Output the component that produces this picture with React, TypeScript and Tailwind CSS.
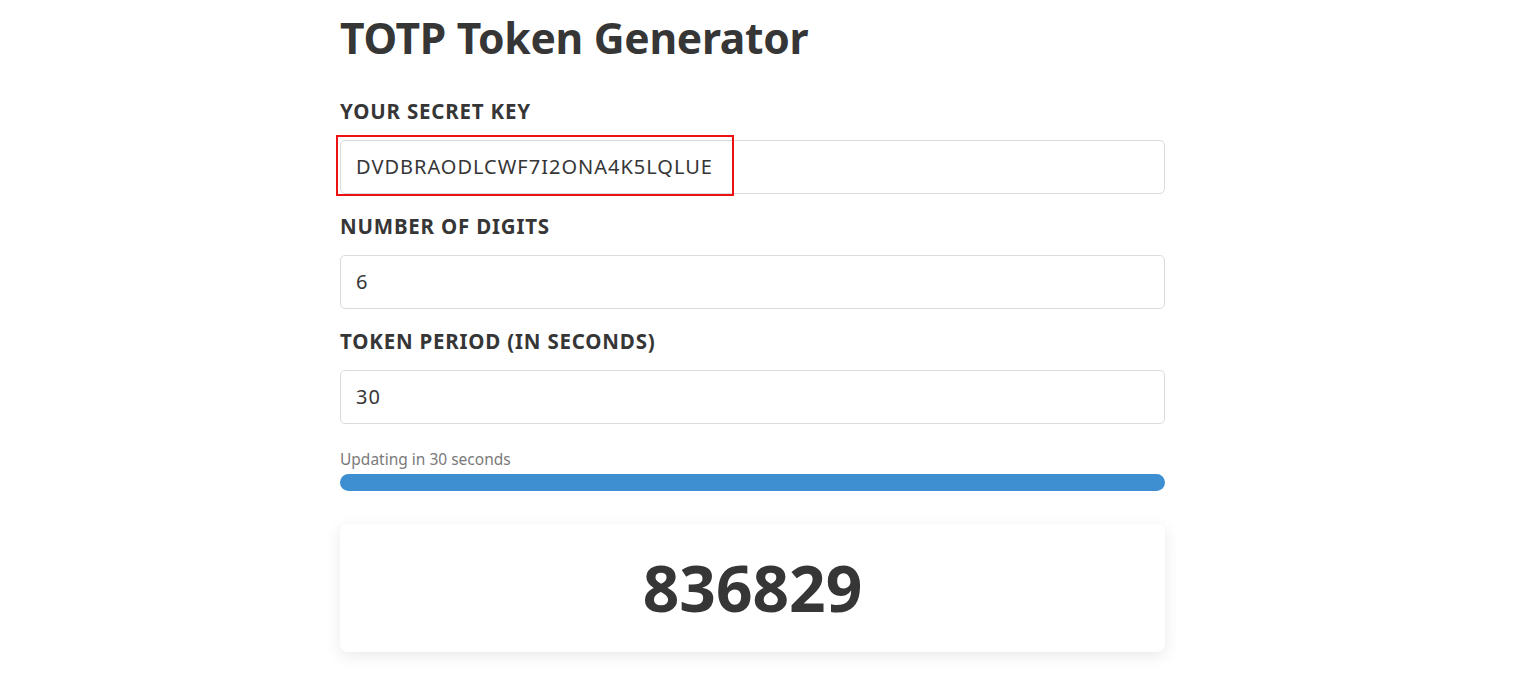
const fields = [
  { label: "Your secret key", value: "DVDBRAODLCWF7I2ONA4K5LQLUE", highlight: true },
  { label: "Number of digits", value: "6" },
  { label: "Token period (in seconds)", value: "30" },
];

const App = () => {
  return (
    <div className="min-h-screen bg-white text-[#363636]" style={{ fontFamily: '"Noto Sans", "Open Sans", sans-serif' }}>
      <div className="w-[825px] ml-[340px] pt-[10px] pb-[20px]">
        <h1 className="text-[42.6px] leading-[54px] font-bold tracking-[-0.3px]">TOTP Token Generator</h1>

        <div className="mt-[36px] flex flex-col">
          {fields.map((f, i) => (
            <div key={f.label} className={i > 0 ? "mt-[21px]" : ""}>
              <label className="block uppercase font-bold text-[20.5px] leading-[23px] tracking-[0.8px]">{f.label}</label>
              <div className="relative mt-[17px]">
                <div className="h-[54px] border border-[#dbdbdb] rounded-[5px] flex items-center px-[15px] text-[20px] tracking-[1px]">
                  {f.value}
                </div>
                {f.highlight && (
                  <div className="absolute left-[-4px] top-[-5px] w-[398px] h-[61px] border-2 border-[#ee1111]" />
                )}
              </div>
            </div>
          ))}
        </div>

        <div className="mt-[24px] text-[15.5px] leading-[22px] text-[#7a7a7a]">Updating in 30 seconds</div>
        <div className="mt-[4px] h-[17px] rounded-full bg-[#3d8fd1]" />

        <div className="mt-[33px] h-[128px] rounded-[8px] bg-white shadow-[0_4px_16px_rgba(0,0,0,0.09)] flex items-center justify-center">
          <span className="text-[64px] font-bold leading-none">836829</span>
        </div>
      </div>
    </div>
  );
};

export default App;
